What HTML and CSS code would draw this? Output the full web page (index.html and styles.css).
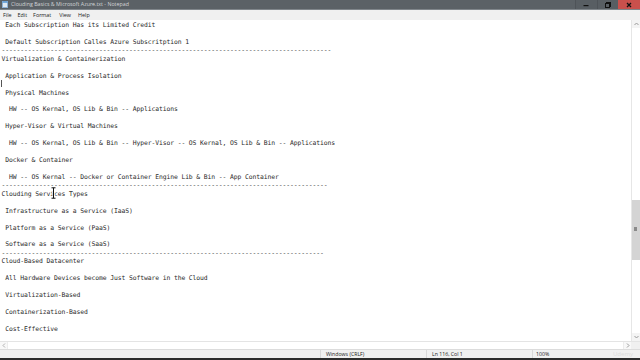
FILE: index.html
```html
<!DOCTYPE html>
<html>
<head>
<meta charset="utf-8">
<link rel="stylesheet" href="styles.css">
</head>
<body>
<div class="window">
  <header class="caption">
    <svg class="appicon" width="6" height="7" viewBox="0 0 6 7"><rect x="0.5" y="0.5" width="5" height="6" fill="#dfe9f3" stroke="#8fb2d6" stroke-width="1"/><rect x="0.5" y="0.5" width="5" height="1.2" fill="#4b8fd0"/></svg>
    <span class="caption-text">Clouding Basics &amp; Microsoft Azure.txt - Notepad</span>
    <div class="caption-btns">
      <div class="cbtn"><svg width="6" height="6" viewBox="0 0 6 6"><rect x="0.5" y="3" width="5" height="1.2" fill="#111"/></svg></div>
      <div class="cbtn"><svg width="6" height="6" viewBox="0 0 6 6"><rect x="1.5" y="0.5" width="4" height="4" fill="none" stroke="#111" stroke-width="1"/><rect x="0.5" y="1.5" width="4" height="4" fill="#585e63" stroke="#111" stroke-width="1"/></svg></div>
      <div class="cbtn cbtn-close"><svg width="6" height="6" viewBox="0 0 6 6"><path d="M1 1 L5 5 M5 1 L1 5" stroke="#111" stroke-width="1.3"/></svg></div>
    </div>
  </header>
  <div class="menubar">
    <span class="mi">File</span><span class="mi">Edit</span><span class="mi">Format</span><span class="mi">View</span><span class="mi">Help</span>
  </div>
  <div class="main">
    <div class="editor">
<pre class="text"> Each Subscription Has its Limited Credit

 Default Subscription Calles Azure Subscritption 1
----------------------------------------------------------------------------------------
Virtualization &amp; Containerization

 Application &amp; Process Isolation

 Physical Machines

  HW -- OS Kernal, OS Lib &amp; Bin -- Applications

 Hyper-Visor &amp; Virtual Machines

  HW -- OS Kernal, OS Lib &amp; Bin -- Hyper-Visor -- OS Kernal, OS Lib &amp; Bin -- Applications

 Docker &amp; Container

  HW -- OS Kernal -- Docker or Container Engine Lib &amp; Bin -- App Container
---------------------------------------------------------------------------------------
Clouding Services Types

 Infrastructure as a Service (IaaS)

 Platform as a Service (PaaS)

 Software as a Service (SaaS)
--------------------------------------------------------------------------------------
Cloud-Based Datacenter

 All Hardware Devices become Just Software in the Cloud

 Virtualization-Based

 Containerization-Based

 Cost-Effective</pre>
      <div class="caret"></div>
      <svg class="ibeam" width="5" height="12" viewBox="0 0 5 12"><path d="M0.5 0.8 H4.5 M2.5 0.8 V11.2 M0.5 11.2 H4.5" stroke="#fff" stroke-width="2.2"/><path d="M0.5 0.8 H4.5 M2.5 0.8 V11.2 M0.5 11.2 H4.5" stroke="#111" stroke-width="1"/></svg>
    </div>
    <div class="vscroll">
      <div class="arrow"><svg width="5" height="4" viewBox="0 0 5 4"><path d="M0.5 3 L2.5 1 L4.5 3" fill="none" stroke="#9a9a9a" stroke-width="1"/></svg></div>
      <div class="track">
        <div class="thumb"></div>
      </div>
      <div class="arrow"><svg width="5" height="4" viewBox="0 0 5 4"><path d="M0.5 1 L2.5 3 L4.5 1" fill="none" stroke="#9a9a9a" stroke-width="1"/></svg></div>
    </div>
  </div>
  <div class="hscroll">
    <div class="harrow"><svg width="4" height="5" viewBox="0 0 4 5"><path d="M3 0.5 L1 2.5 L3 4.5" fill="none" stroke="#b0b0b0" stroke-width="1"/></svg></div>
    <div class="htrack"></div>
    <div class="harrow hright"><svg width="4" height="5" viewBox="0 0 4 5"><path d="M1 0.5 L3 2.5 L1 4.5" fill="none" stroke="#9a9a9a" stroke-width="1"/></svg></div>
    <div class="corner"></div>
  </div>
  <div class="statusbar">
    <div class="sfill"></div>
    <div class="scell w1">Windows (CRLF)</div>
    <div class="scell w2">Ln 116, Col 1</div>
    <div class="scell w3">100%<span class="wm">Udemy</span></div>
  </div>
  <div class="bottom"></div>
</div>
</body>
</html>
```

FILE: styles.css
```css
* { box-sizing: border-box; }
html, body { margin: 0; padding: 0; }
body { width: 640px; height: 360px; overflow: hidden; background-color: #ffffff; }
.window {
  display: flex; flex-direction: column; width: 640px; height: 360px;
  background: linear-gradient(to bottom, #5b6166 0, #5b6166 10px, #ffffff 10px);
}

.caption {
  height: 10px; flex: none;
  background: #5b6166;
  display: flex; align-items: center;
  border-bottom: 1px solid #80868b;
}
.appicon { margin-left: 2px; margin-right: 3px; flex: none; }
.caption-text {
  font-family: "Open Sans", "Liberation Sans", sans-serif;
  font-size: 5.3px; color: #d3d6d8; white-space: nowrap; line-height: 9px;
}
.caption-btns { margin-left: auto; display: flex; height: 9px; align-self: flex-start; }
.cbtn {
  width: 21.5px; height: 9px; display: flex; align-items: center; justify-content: center;
  border-left: 1px solid #4e5358; background: #585e63;
}
.cbtn-close { background: #c9504c; width: 22px; border-left: none; }

.menubar {
  height: 10px; flex: none;
  background-color: #f0f0f0;
  display: flex; align-items: center;
  padding-left: 3px; gap: 5px;
  font-family: "Open Sans", "Liberation Sans", sans-serif;
  font-size: 5.4px; color: #1a1a1a;
}
.mi { line-height: 9px; }
.mi:nth-child(2) { margin-left: 1px; }
.mi:nth-child(3) { margin-left: 1px; }
.mi:nth-child(4) { margin-left: 3px; }
.mi:nth-child(5) { margin-left: 2px; }

.main { flex: none; height: 321px; display: flex; background-color: #ffffff; }
.editor { flex: 1; position: relative; overflow: hidden; }
.text {
  margin: 0; padding: 1px 0 0 1.5px;
  font-family: "DejaVu Sans Mono", "Liberation Mono", monospace;
  font-size: 6.4px; letter-spacing: -0.1px;
  line-height: 8.44px;
  color: #2a2a2a;
  white-space: pre;
}
.caret { position: absolute; left: 1px; top: 60px; width: 1px; height: 7px; background-color: #555; }
.ibeam { position: absolute; left: 51px; top: 167px; }

.vscroll {
  width: 9px; flex: none; display: flex; flex-direction: column;
  background-color: #ffffff; border-left: 1px solid #e6e6e6;
}
.vscroll .arrow { height: 8px; display: flex; align-items: center; justify-content: center; flex: none; background-color: #f4f4f4; }
.track { flex: 1; display: flex; flex-direction: column; padding-top: 172px; background-color: #ffffff; }
.thumb { height: 60px; background-color: #d4d4d4; position: relative; }
.thumb::after { content: ""; position: absolute; left: 2px; top: 27px; width: 3px; height: 4px; background-color: #8a8a8a; }

.hscroll {
  height: 8px; flex: none; display: flex;
  border-top: 1px solid #e4e4e4; background-color: #ffffff;
}
.harrow { width: 8px; display: flex; align-items: center; justify-content: center; background-color: #f8f8f8; border-right: 1px solid #ececec; }
.hright { border-left: 1px solid #ececec; border-right: none; }
.htrack { flex: 1; background-color: #ffffff; }
.corner { width: 9px; background-color: #f0f0f0; }

.statusbar {
  height: 9px; flex: none; display: flex;
  background-color: #f0f0f0;
  border-top: 1px solid #dcdcdc;
  font-family: "Open Sans", "Liberation Sans", sans-serif;
  font-size: 5.2px; color: #222;
}
.sfill { width: 320px; }
.scell { border-left: 1px solid #d8d8d8; padding-left: 5px; line-height: 8px; white-space: nowrap; position: relative; }
.w1 { width: 106px; }
.w2 { width: 106px; }
.w3 { flex: 1; padding-left: 3px; }
.wm { position: absolute; left: 80px; top: 0; color: #dcdcdc; font-size: 6px; }

.bottom { height: 2px; flex: none; background-color: #2c2c2c; }
```
